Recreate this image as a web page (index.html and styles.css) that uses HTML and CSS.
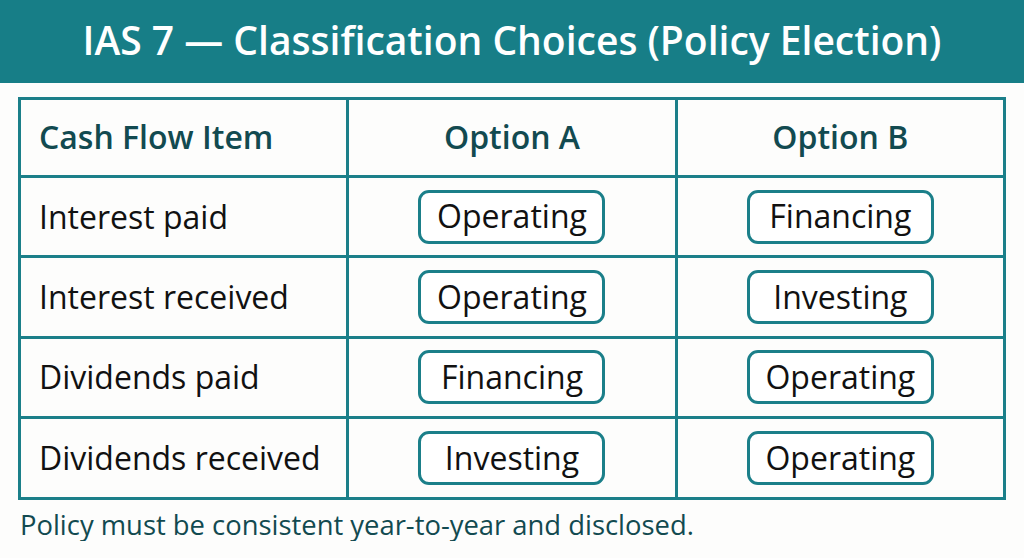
FILE: index.html
```html
<!DOCTYPE html>
<html>
<head>
<meta charset="utf-8">
<link rel="stylesheet" href="styles.css">
</head>
<body>
<header class="banner"><h1 class="title">IAS 7 — Classification Choices (Policy Election)</h1></header>
<main class="content">
<table class="grid">
<thead>
<tr><th class="col-item">Cash Flow Item</th><th>Option A</th><th>Option B</th></tr>
</thead>
<tbody>
<tr><td class="col-item">Interest paid</td><td><span class="pill">Operating</span></td><td><span class="pill">Financing</span></td></tr>
<tr><td class="col-item">Interest received</td><td><span class="pill">Operating</span></td><td><span class="pill">Investing</span></td></tr>
<tr><td class="col-item">Dividends paid</td><td><span class="pill">Financing</span></td><td><span class="pill">Operating</span></td></tr>
<tr><td class="col-item">Dividends received</td><td><span class="pill">Investing</span></td><td><span class="pill">Operating</span></td></tr>
</tbody>
</table>
<p class="note">Policy must be consistent year-to-year and disclosed.</p>
</main>
</body>
</html>
```

FILE: styles.css
```css
html, body {
  margin: 0;
  padding: 0;
  background: #fdfdfc;
  font-family: "Open Sans", "Noto Sans", sans-serif;
}
.banner {
  height: 83px;
  background: #177e87;
  display: flex;
  align-items: center;
  justify-content: center;
}
.title {
  margin: 0 0 2px 0;
  color: #ffffff;
  font-size: 39px;
  font-weight: 600;
  letter-spacing: 0;
  line-height: 1.2;
}
.content {
  padding: 14px 18px 0 18px;
}
.grid {
  width: 988px;
  border-collapse: collapse;
  table-layout: fixed;
}
.grid th, .grid td {
  border: 3px solid #1b7f89;
  text-align: center;
  vertical-align: middle;
  padding: 0;
  line-height: 1.2;
}
.grid th {
  height: 75px;
  font-size: 32px;
  font-weight: 600;
  color: #124a50;
}
.grid td {
  height: 77.4px;
  font-size: 32px;
  font-weight: 400;
  color: #111;
}
.grid .col-item {
  text-align: left;
  padding-left: 18px;
}
.pill {
  display: inline-flex;
  align-items: center;
  justify-content: center;
  box-sizing: border-box;
  width: 187px;
  height: 54px;
  border: 3px solid #1b7f89;
  border-radius: 11px;
  background: #fff;
}
.note {
  margin: 9px 0 0 2px;
  font-size: 27.4px;
  line-height: 1.2;
  color: #124a50;
}
```
